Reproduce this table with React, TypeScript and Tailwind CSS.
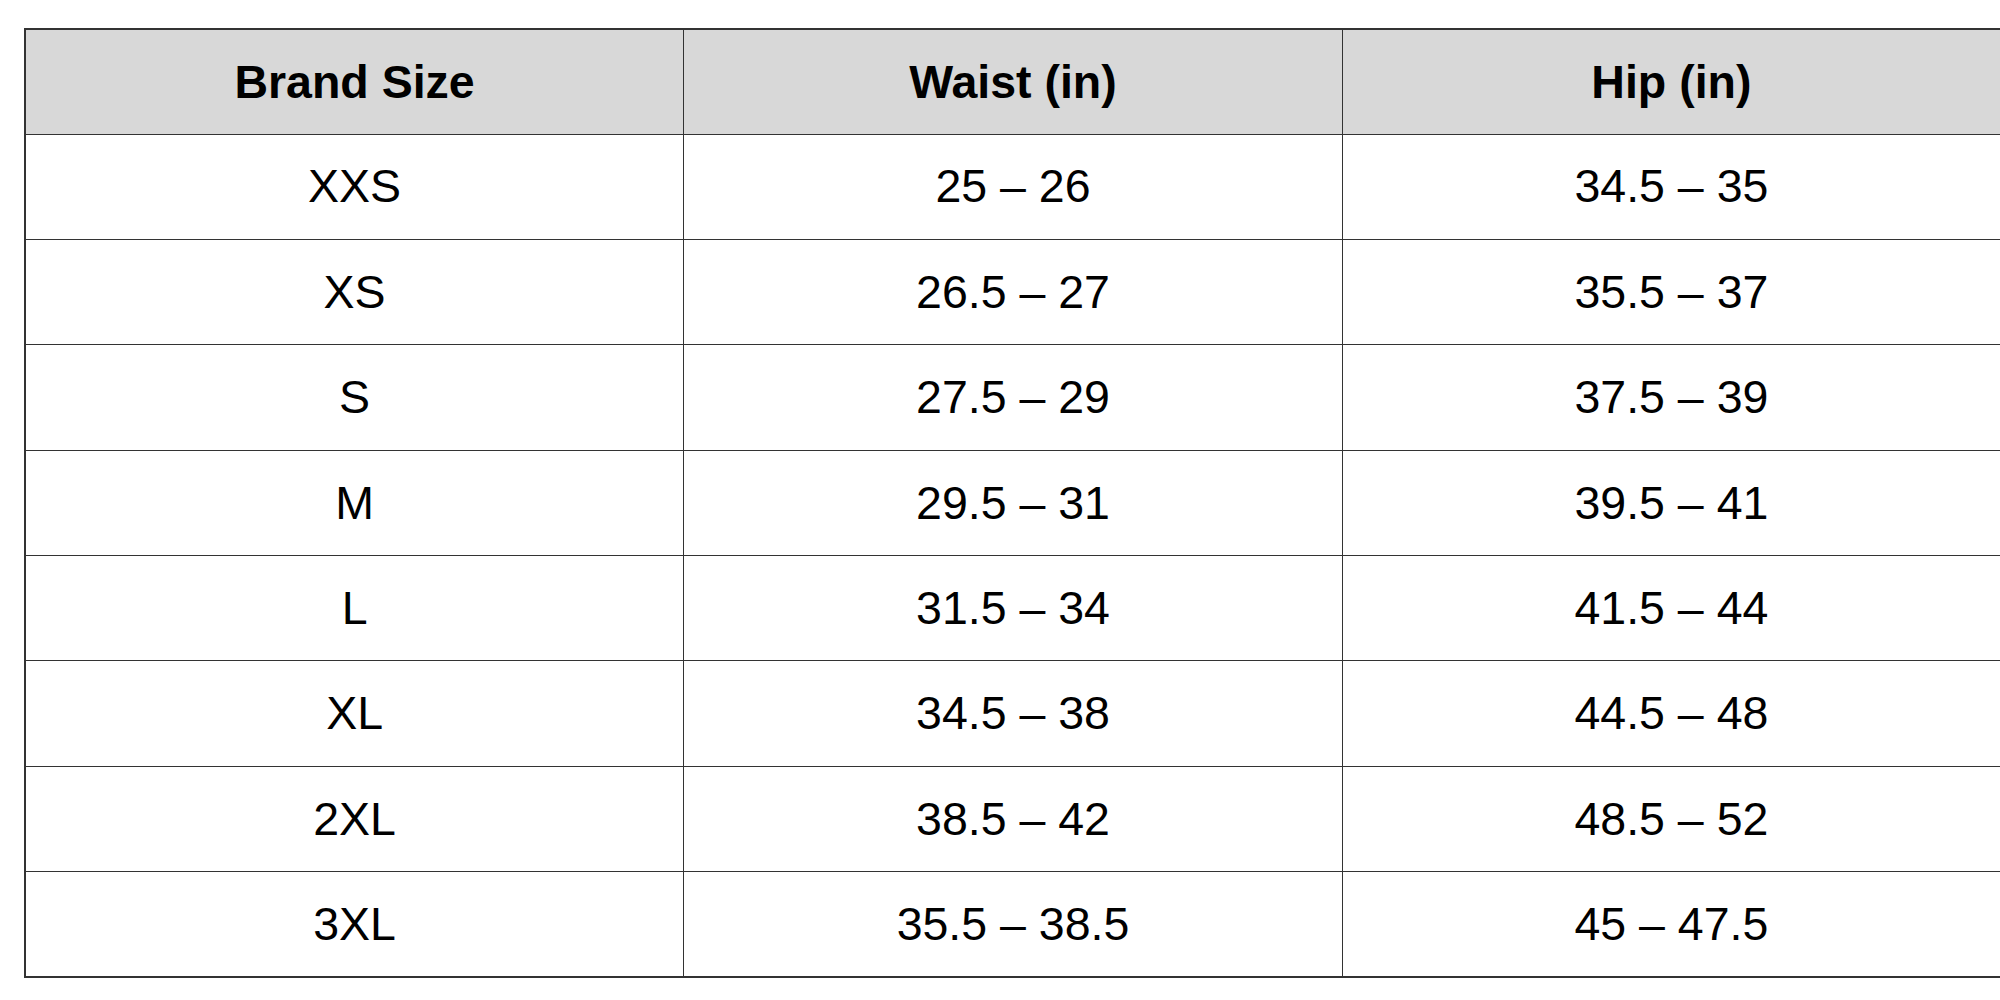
import React from "react";

const rows: [string, string, string][] = [
  ["XXS", "25 – 26", "34.5 – 35"],
  ["XS", "26.5 – 27", "35.5 – 37"],
  ["S", "27.5 – 29", "37.5 – 39"],
  ["M", "29.5 – 31", "39.5 – 41"],
  ["L", "31.5 – 34", "41.5 – 44"],
  ["XL", "34.5 – 38", "44.5 – 48"],
  ["2XL", "38.5 – 42", "48.5 – 52"],
  ["3XL", "35.5 – 38.5", "45 – 47.5"],
];

export default function App() {
  return (
    <div className="w-[2000px] h-[1000px] bg-white overflow-hidden pt-[28px] pl-[24px]" style={{ fontFamily: '"Liberation Sans", Arial, sans-serif' }}>
      <table className="w-[1978px] table-fixed border-collapse border-2 border-[#333] text-black text-[46.5px] leading-none">
        <thead>
          <tr className="h-[105px] bg-[#d8d8d8]">
            <th className="border border-[#333] font-bold text-center align-middle">Brand Size</th>
            <th className="border border-[#333] font-bold text-center align-middle">Waist (in)</th>
            <th className="border border-[#333] font-bold text-center align-middle">Hip (in)</th>
          </tr>
        </thead>
        <tbody>
          {rows.map((r) => (
            <tr key={r[0]} className="h-[105.4px]">
              {r.map((c, i) => (
                <td key={i} className="border border-[#333] text-center align-middle font-normal">
                  {c}
                </td>
              ))}
            </tr>
          ))}
        </tbody>
      </table>
    </div>
  );
}
